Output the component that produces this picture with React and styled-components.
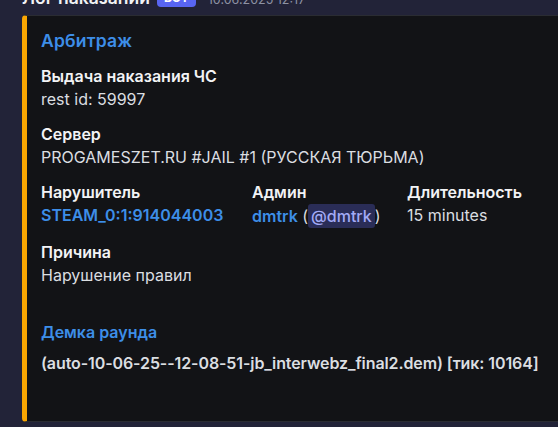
import styled, { createGlobalStyle } from "styled-components"

const GlobalStyle = createGlobalStyle`
    html, body {
        margin: 0;
        padding: 0;
        background: #222338;
        overflow: hidden;
    }
    body {
        font-family: Inter, "Noto Sans", sans-serif;
        -webkit-font-smoothing: antialiased;
    }
`

function App() {
    const inline = [
        { name: "Нарушитель", value: <Link>STEAM_0:1:914044003</Link> },
        {
            name: "Админ",
            value: (
                <>
                    <Link>dmtrk</Link> (<Mention>@dmtrk</Mention>)
                </>
            ),
        },
        { name: "Длительность", value: "15 minutes" },
    ]

    return (
        <Page>
            <GlobalStyle />
            <Header>
                <Username>Лог наказаний</Username>
                <BotTag>BOT</BotTag>
                <Timestamp>10.06.2025 12:17</Timestamp>
            </Header>

            <Embed>
                <Title>Арбитраж</Title>
                <Fields>
                    <Field>
                        <FieldName>Выдача наказания ЧС</FieldName>
                        <FieldValue>rest id: 59997</FieldValue>
                    </Field>
                    <Field>
                        <FieldName>Сервер</FieldName>
                        <FieldValue>PROGAMESZET.RU #JAIL #1 (РУССКАЯ ТЮРЬМА)</FieldValue>
                    </Field>
                    <InlineRow>
                        {inline.map((f) => (
                            <Field key={f.name}>
                                <FieldName>{f.name}</FieldName>
                                <FieldValue>{f.value}</FieldValue>
                            </Field>
                        ))}
                    </InlineRow>
                    <Field>
                        <FieldName>Причина</FieldName>
                        <FieldValue>Нарушение правил</FieldValue>
                    </Field>
                    <DemoField>
                        <FieldValue>
                            <Link>Демка раунда</Link>
                        </FieldValue>
                        <DemoName>(auto-10-06-25--12-08-51-jb_interwebz_final2.dem) [тик: 10164]</DemoName>
                    </DemoField>
                </Fields>
            </Embed>
        </Page>
    )
}

export default App

const Page = styled.div`
    width: 558px;
    height: 427px;
    padding-left: 22px;
    box-sizing: border-box;
    overflow: hidden;
`

const Header = styled.div`
    display: flex;
    align-items: baseline;
    height: 22px;
    margin-top: -13px;
    line-height: 22px;
`

const Username = styled.span`
    color: #f2f3f5;
    font-size: 17.5px;
    font-weight: 600;
`

const BotTag = styled.span`
    align-self: center;
    height: 18px;
    margin-left: 7px;
    padding: 0 7px;
    border-radius: 4px;
    background: #5865f2;
    color: #fff;
    font-size: 12px;
    font-weight: 700;
    line-height: 18px;
`

const Timestamp = styled.span`
    margin-left: 12px;
    color: #8d92a3;
    font-size: 12.5px;
`

const Embed = styled.div`
    width: 560px;
    height: 407px;
    margin-top: 6px;
    padding: 14px 16px 0 14px;
    box-sizing: border-box;
    background: #121316;
    border: 1px solid #2a2c32;
    border-left: 5px solid #f9a602;
    border-radius: 4px;
`

const Title = styled.div`
    color: #3d8ee8;
    font-size: 17.5px;
    font-weight: 600;
    line-height: 22px;
    letter-spacing: 0.2px;
    margin-bottom: 14px;
`

const Fields = styled.div`
    display: flex;
    flex-direction: column;
    gap: 14px;
`

const Field = styled.div`
    display: flex;
    flex-direction: column;
    min-width: 0;
`

const FieldName = styled.div`
    color: #f2f3f5;
    font-size: 16px;
    font-weight: 600;
    line-height: 20px;
    margin-bottom: 2px;
`

const FieldValue = styled.div`
    color: #dbdee1;
    font-size: 16px;
    font-weight: 400;
    line-height: 22px;
    white-space: nowrap;
`

const InlineRow = styled.div`
    display: grid;
    grid-template-columns: 211px 155px 1fr;
`

const Link = styled.span`
    color: #3d8ee8;
    font-weight: 600;
`

const Mention = styled.span`
    display: inline-block;
    padding: 0 3px;
    line-height: 24px;
    border-radius: 3px;
    background: #2a2d57;
    color: #a3abf6;
    font-weight: 500;
`

const DemoField = styled.div`
    display: flex;
    flex-direction: column;
    padding-top: 21px;
`

const DemoName = styled.div`
    margin-top: 9px;
    color: #dbdee1;
    font-size: 16px;
    font-weight: 600;
    line-height: 22px;
    letter-spacing: -0.1px;
    white-space: nowrap;
`
